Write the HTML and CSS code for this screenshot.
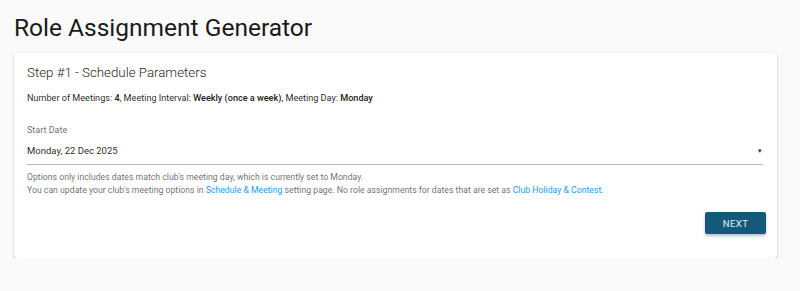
FILE: index.html
```html
<!DOCTYPE html>
<html lang="en">
<head>
  <meta charset="UTF-8">
  <meta name="viewport" content="width=device-width, initial-scale=1.0">
  <title>Role Assignment Generator</title>
  <link rel="stylesheet" href="styles.css">
</head>
<body>
  <div class="page">
    <h1 class="titulo">Role Assignment Generator</h1>

    <div class="card">
      <h2 class="card-title">Step #1 - Schedule Parameters</h2>
      <p class="summary">Number of Meetings: <b>4</b>, Meeting Interval: <b>Weekly (once a week)</b>, Meeting Day: <b>Monday</b></p>

      <div class="field">
        <label class="field-label">Start Date</label>
        <div class="select">
          <span>Monday, 22 Dec 2025</span>
          <span class="arrow">&#9662;</span>
        </div>
        <div class="helper">
          Options only includes dates match club's meeting day, which is currently set to Monday.<br>
          You can update your club's meeting options in <a href="#">Schedule &amp; Meeting</a> setting page. No role assignments for dates that are set as <a href="#">Club Holiday &amp; Contest</a>.
        </div>
      </div>

      <div class="actions">
        <button class="botao">NEXT</button>
      </div>
    </div>
  </div>
</body>
</html>
```

FILE: styles.css
```css
body{
  margin: 0;
  background-color: #fafafa;
  font-family: Roboto, "Liberation Sans", Arial, sans-serif;
  color: rgba(0, 0, 0, 0.87);
}

.page{
  padding: 0 23px 0 14px;
}

.titulo{
  margin: 0 0 10px 0;
  padding-top: 13px;
  font-size: 24.5px;
  font-weight: 400;
  line-height: 30px;
  color: #1a1a1a;
}

.card{
  background-color: #fff;
  border-radius: 3px;
  box-shadow: 0 1px 3px rgba(0, 0, 0, 0.2), 0 1px 1px rgba(0, 0, 0, 0.14);
  padding: 12px 11px 24px 13px;
}

.card-title{
  margin: 0;
  font-size: 13.3px;
  font-weight: 300;
  line-height: 16px;
  color: #1f1f1f;
}

.summary{
  margin: 11px 0 0 0;
  font-size: 9.1px;
  line-height: 12px;
}

.summary b{
  font-weight: 500;
  color: #222;
}

.field{
  margin-top: 20px;
}

.field-label{
  display: block;
  font-size: 9px;
  line-height: 12px;
  color: rgba(0, 0, 0, 0.6);
}

.select{
  display: flex;
  justify-content: space-between;
  align-items: center;
  margin-top: 9px;
  margin-right: 3px;
  padding-bottom: 7px;
  border-bottom: 1px solid #b5b5b5;
  font-size: 9.5px;
  line-height: 12px;
}

.arrow{
  font-size: 7px;
  margin-right: 1px;
}

.helper{
  margin-top: 6px;
  font-size: 8.7px;
  line-height: 13px;
  color: rgba(0, 0, 0, 0.6);
}

.helper a{
  color: #1e9be9;
  text-decoration: none;
}

.actions{
  display: flex;
  justify-content: flex-end;
  margin-top: 15px;
}

.botao{
  border: none;
  border-radius: 2px;
  background-color: #135a7a;
  color: #e8eef2;
  font-family: Roboto, "Liberation Sans", Arial, sans-serif;
  font-size: 9.5px;
  font-weight: 400;
  letter-spacing: 0.4px;
  width: 61px;
  height: 22px;
  padding: 0;
  box-shadow: 0 2px 3px rgba(0, 0, 0, 0.25);
}
```
